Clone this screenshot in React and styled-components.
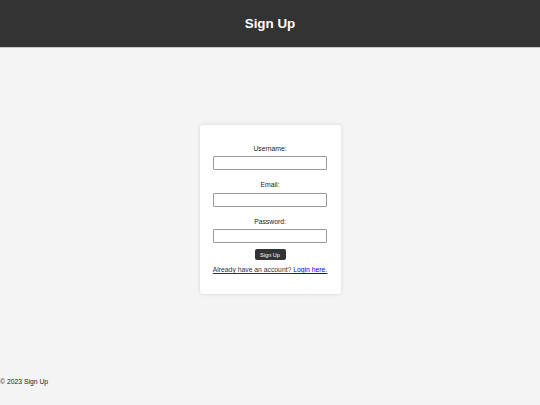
import React from 'react';
import styled, { createGlobalStyle } from 'styled-components';

const GlobalStyle = createGlobalStyle`
    html, body {
        margin: 0;
        padding: 0;
        background: #f4f4f4;
        font-family: "Liberation Sans", Arial, sans-serif;
    }
`;

const Page = styled.div`
    display: flex;
    flex-direction: column;
    min-height: 100vh;
`;

const Header = styled.header`
    height: 47px;
    background: #333333;
    border-bottom: 1px solid #c8c8c8;
    display: flex;
    align-items: center;
    justify-content: center;
`;

const Title = styled.h1`
    margin: 0;
    color: #ffffff;
    font-size: 13.4px;
    font-weight: bold;
`;

const Main = styled.main`
    flex: 1;
    display: flex;
    align-items: center;
    justify-content: center;
`;

const Card = styled.form`
    width: 141px;
    box-sizing: border-box;
    padding: 20px 13.5px 20px;
    background: #ffffff;
    border-radius: 3px;
    box-shadow: 0 0 4px rgba(0, 0, 0, 0.12);
    display: flex;
    flex-direction: column;
    align-items: center;
`;

const Label = styled.label`
    display: block;
    font-size: 6.8px;
    line-height: 8px;
    color: #1a1a1a;
    margin-bottom: 3.5px;
`;

const Input = styled.input`
    display: block;
    width: 100%;
    height: 14px;
    box-sizing: border-box;
    border: 1px solid #9a9a9a;
    border-radius: 1px;
    margin: 0 0 ${props => props.last ? '6px' : '11px'};
    padding: 0 2px;
    font-size: 6.67px;
`;

const Button = styled.button`
    width: 31px;
    height: 11px;
    padding: 0;
    border: none;
    border-radius: 2px;
    background: #333333;
    color: #ffffff;
    font-family: "Liberation Sans", Arial, sans-serif;
    font-size: 5.6px;
    cursor: pointer;
`;

const Note = styled.p`
    margin: 6px 0 0;
    font-size: 6.8px;
    line-height: 8px;
    color: #333;
    text-decoration: underline;
    white-space: nowrap;
`;

const Link = styled.a`
    color: #0000ee;
`;

const Footer = styled.footer`
    padding: 7px 0 19px;
    font-size: 6.8px;
    line-height: 8px;
    color: #1a1a1a;
`;

export default function App() {
    return (
        <Page>
            <GlobalStyle />
            <Header>
                <Title>Sign Up</Title>
            </Header>
            <Main>
                <Card onSubmit={e => e.preventDefault()}>
                    <Label htmlFor="username">Username:</Label>
                    <Input id="username" type="text" />
                    <Label htmlFor="email">Email:</Label>
                    <Input id="email" type="email" />
                    <Label htmlFor="password">Password:</Label>
                    <Input id="password" type="password" last />
                    <Button type="submit">Sign Up</Button>
                    <Note>Already have an account? <Link href="#">Login here.</Link></Note>
                </Card>
            </Main>
            <Footer>© 2023 Sign Up</Footer>
        </Page>
    );
}
